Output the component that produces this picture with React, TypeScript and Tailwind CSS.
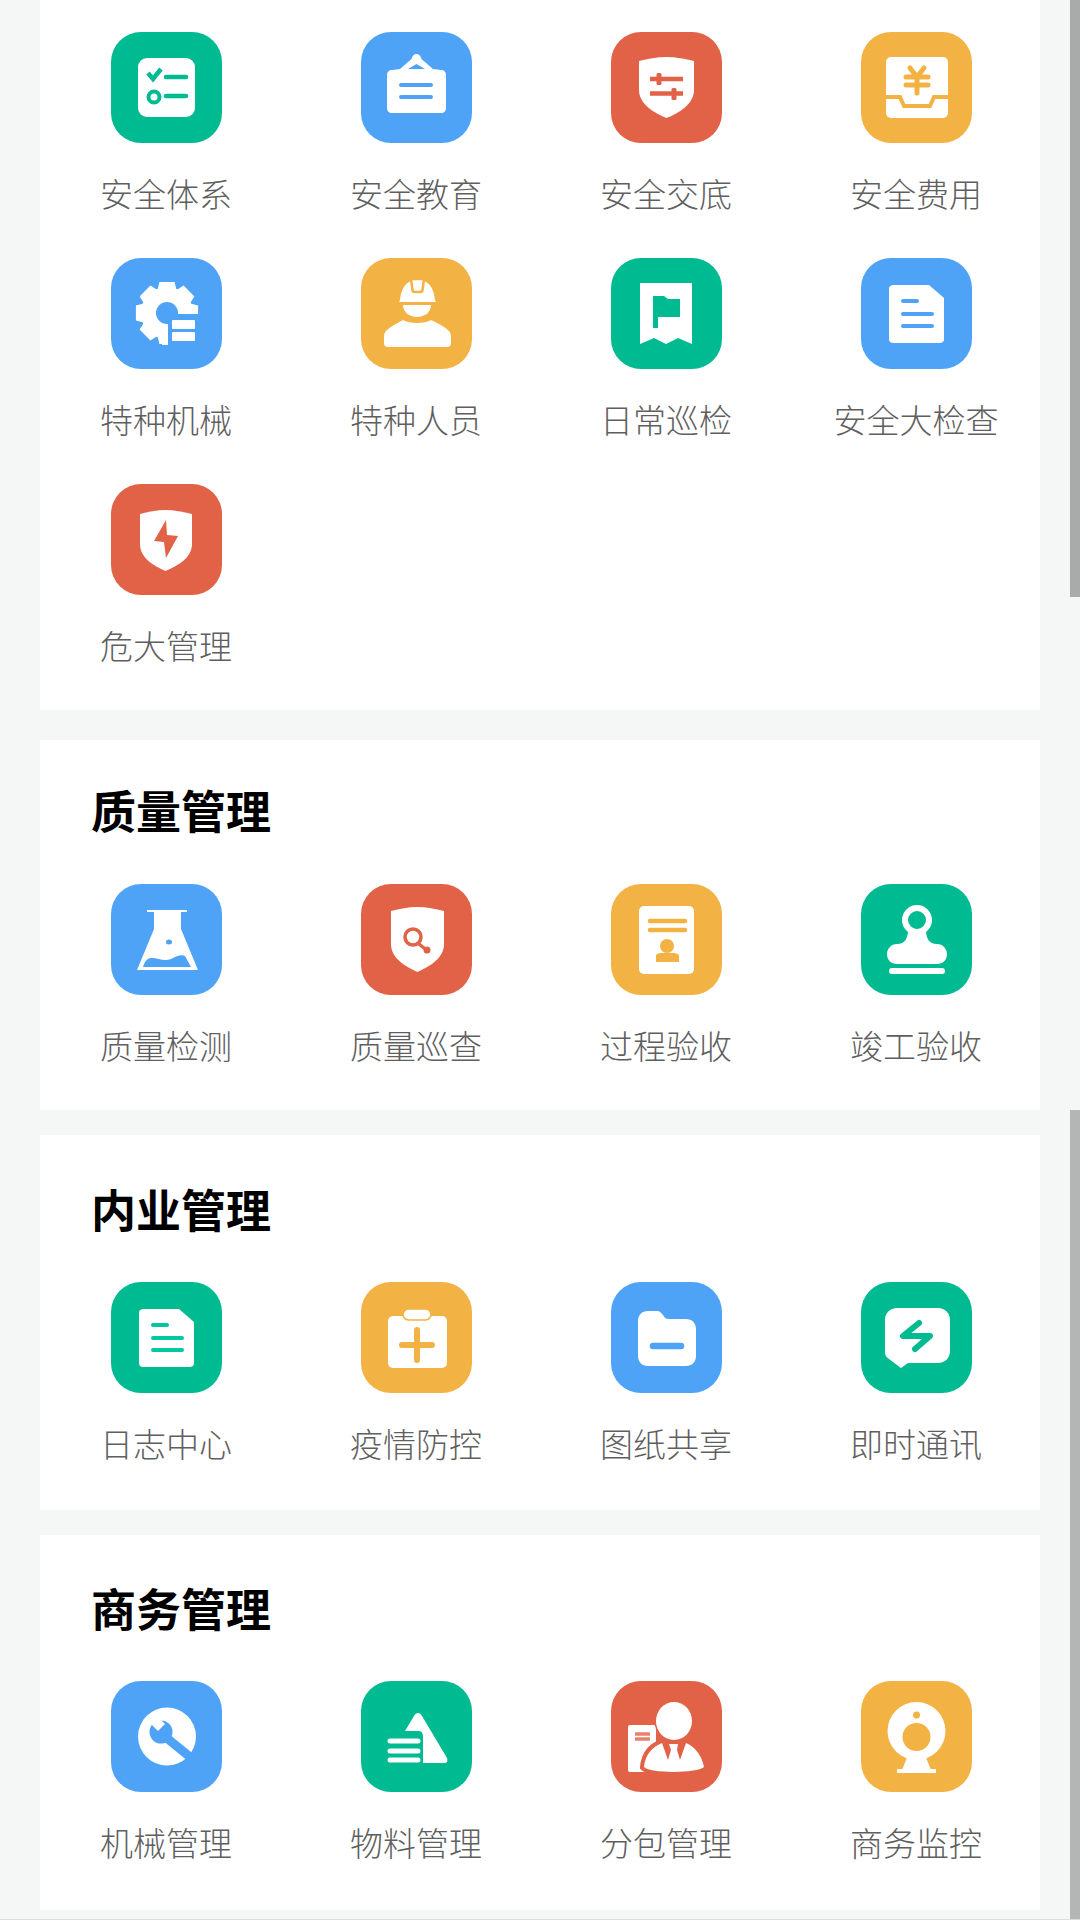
import React from 'react';

const GREEN = '#00BA92';
const BLUE = '#4EA3F7';
const RED = '#E26248';
const ORANGE = '#F3B244';

const bgByColor: Record<string, string> = {
  [GREEN]: 'bg-[#00BA92]',
  [BLUE]: 'bg-[#4EA3F7]',
  [RED]: 'bg-[#E26248]',
  [ORANGE]: 'bg-[#F3B244]',
};

const SHIELD = 'M55.5 25 C46 25 37 27 28 29 L28 58 C28 72 43 81 55.5 86 C68 81 83 72 83 58 L83 29 C74 27 65 25 55.5 25 Z';

// 8 teeth gear outline, centre 56,55
const gearPath = () => {
  const pts: string[] = [];
  for (let i = 0; i < 8; i++) {
    const a = (i * Math.PI) / 4 - Math.PI / 2;
    const steps: [number, number][] = [
      [-0.36, 26],
      [-0.24, 32],
      [0.24, 32],
      [0.36, 26],
    ];
    steps.forEach(([d, r]) => {
      pts.push(`${(56 + r * Math.cos(a + d)).toFixed(1)} ${(55 + r * Math.sin(a + d)).toFixed(1)}`);
    });
  }
  return `M${pts.join(' L')} Z`;
};

const Checklist = () => (
  <>
    <rect x="27" y="26" width="57" height="59" rx="9" fill="#fff" />
    <path d="M37 41 L42 47 L50 37" fill="none" stroke={GREEN} strokeWidth="4.5" />
    <path d="M55 45 H75 M55 64 H75" stroke={GREEN} strokeWidth="4.5" strokeLinecap="round" />
    <circle cx="43" cy="65" r="5.5" fill="none" stroke={GREEN} strokeWidth="4" />
  </>
);

const HangingBoard = () => (
  <>
    <path d="M55.5 22 C58 22 60 24 60.5 27 L72 37 L80 38 C83 38 85 40 85 43 L85 76 C85 79 83 81 80 81 L31 81 C28 81 26 79 26 76 L26 43 C26 40 28 38 31 38 L39 37 L50.5 27 C51 24 53 22 55.5 22 Z" fill="#fff" />
    <path d="M47 37 L55.5 32 L64 37 Z" fill={BLUE} />
    <path d="M40 53 H70 M40 65 H70" stroke={BLUE} strokeWidth="4" strokeLinecap="round" />
  </>
);

const ShieldSliders = () => (
  <>
    <path d={SHIELD} fill="#fff" />
    <path d="M39 47 H72 M39 61.5 H72" stroke={RED} strokeWidth="4.5" />
    <rect x="45.5" y="41" width="5" height="12" rx="1.5" fill={RED} />
    <rect x="60.5" y="56" width="5" height="12" rx="1.5" fill={RED} />
  </>
);

const YenTray = () => (
  <>
    <rect x="25" y="25" width="62" height="61" rx="5" fill="#fff" />
    <path d="M24 65 H39 L43 74 H69 L73 65 H88" fill="none" stroke={ORANGE} strokeWidth="4" />
    <path d="M49 36 L56 45 L63 36 M56 45 V61 M45 45 H67 M45 53 H67" fill="none" stroke={ORANGE} strokeWidth="5" strokeLinecap="round" />
  </>
);

const GearList = () => (
  <>
    <path d={gearPath()} fill="#fff" />
    <circle cx="56" cy="55" r="11" fill={BLUE} />
    <rect x="56" y="56" width="34" height="34" fill={BLUE} />
    <rect x="51" y="66" width="6" height="21" fill="#fff" />
    <rect x="61" y="62" width="23" height="9" rx="1" fill="#fff" />
    <rect x="61" y="74" width="23" height="9" rx="1" fill="#fff" />
  </>
);

const Worker = () => (
  <>
    <path d="M39 42 C40 32 44 25 50 23 H63 C69 25 73 32 74 42 L75 44 H38 Z" fill="#fff" />
    <path d="M50 21 H63 L61.5 32 C61.5 33 60.5 34 59 34 H54 C52.5 34 51.5 33 51.5 32 Z" fill="#fff" stroke={ORANGE} strokeWidth="2.5" />
    <path d="M42 47 H70 C70 54 64 59 56 59 C48 59 42 54 42 47 Z" fill="#fff" />
    <path d="M23 78 C23 71 35 66 42 62 C48 66 64 66 70 62 C78 66 90 71 90 78 L90 85 C90 88 88 89 86 89 L27 89 C25 89 23 88 23 85 Z" fill="#fff" />
  </>
);

const FlagTicket = () => (
  <>
    <path d="M29 25 H81 V86 L67 80 L55 86 L43 80 L29 86 Z" fill="#fff" />
    <path d="M42 38 H53 L57 41 H69 V59 H47 V70 H42 Z" fill={GREEN} />
  </>
);

const Doc = ({ color, top = 27 }: { color: string; top?: number }) => (
  <>
    <path d={`M33 ${top} H68 L83 ${top + 13} V${top + 54} C83 ${top + 57} 81 ${top + 58} 78 ${top + 58} H33 C30 ${top + 58} 28 ${top + 57} 28 ${top + 54} V${top + 4} C28 ${top + 1} 30 ${top} 33 ${top} Z`} fill="#fff" />
    <path d={`M42 ${top + 16} H56 M42 ${top + 29} H71 M42 ${top + 41} H71`} stroke={color} strokeWidth="4" strokeLinecap="round" />
  </>
);

const ShieldBolt = () => (
  <>
    <path d="M54.5 26 C46 26 37 28 29 30 L29 60 C29 74 43 82 54.5 87 C66 82 81 74 81 60 L81 30 C72 28 63 26 54.5 26 Z" fill="#fff" />
    <path d="M55 36 L43 57 L53 58 L55 74 L67 52 L56 51 Z" fill={RED} />
  </>
);

const Flask = () => (
  <>
    <path d="M36 26 H76 V28 H70 V45 L87 86 H26 L43 45 V28 H36 Z" fill="#fff" />
    <path d="M32 83 C34 76 37 74 41 74 C48 74 52 78 60 75 C66 72 70 70 74 72 L80 83 Z" fill={BLUE} />
    <ellipse cx="58" cy="58" rx="3" ry="2.5" fill={BLUE} />
  </>
);

const ShieldSearch = () => (
  <>
    <path d="M56.5 23 C47 23 39 25 30 27 L30 60 C30 75 46 83 56.5 88 C67 83 83 75 83 60 L83 27 C74 25 66 23 56.5 23 Z" fill="#fff" />
    <circle cx="52" cy="53" r="8" fill="none" stroke={RED} strokeWidth="3.5" />
    <path d="M58 60 L68 68" stroke={RED} strokeWidth="3.5" />
    <circle cx="66" cy="66" r="3.5" fill={RED} />
  </>
);

const PersonCard = () => (
  <>
    <rect x="28" y="22" width="55" height="68" rx="5" fill="#fff" />
    <path d="M39 37 H74 M39 46 H74" stroke={ORANGE} strokeWidth="4.5" strokeLinecap="round" />
    <circle cx="56" cy="62" r="7" fill={ORANGE} />
    <path d="M45 72 C45 70 47 69 50 69 H62 C65 69 68 70 68 72 V78 H45 Z" fill={ORANGE} />
  </>
);

const Stamp = () => (
  <>
    <circle cx="56" cy="36" r="12" fill="none" stroke="#fff" strokeWidth="6" />
    <path d="M47 46 L65 46 C65 54 68 60 76 60 C82 60 86 65 86 70 C86 76 82 80 76 80 H36 C30 80 26 76 26 70 C26 65 30 60 36 60 C44 60 47 54 47 46 Z" fill="#fff" />
    <rect x="28" y="84" width="56" height="6" rx="3" fill="#fff" />
  </>
);

const MedKit = () => (
  <>
    <rect x="27" y="34" width="59" height="52" rx="5" fill="#fff" />
    <rect x="42" y="27" width="28" height="11" rx="5.5" fill="#fff" stroke={ORANGE} strokeWidth="1.5" />
    <path d="M56 48 V78 M41 63 H71" stroke={ORANGE} strokeWidth="6" strokeLinecap="round" />
  </>
);

const Folder = () => (
  <>
    <path d="M37 29 H46 C49 29 50 31 52 33 C54 36 55 37 58 37 H75 C81 37 85 41 85 47 V74 C85 80 81 84 75 84 H37 C31 84 27 80 27 74 V39 C27 33 31 29 37 29 Z" fill="#fff" />
    <path d="M42 64 H70" stroke={BLUE} strokeWidth="6.5" strokeLinecap="round" />
  </>
);

const ChatBolt = () => (
  <>
    <path d="M36 26 H77 C84 26 89 31 89 38 V69 C89 76 84 81 77 81 H47 L40 86 L28 77 C25 75 24 73 24 70 V38 C24 31 29 26 36 26 Z" fill="#fff" />
    <path d="M58 41 L42 54 H69 L54 67" fill="none" stroke={GREEN} strokeWidth="6" strokeLinecap="round" strokeLinejoin="round" />
  </>
);

const Wrench = () => (
  <>
    <circle cx="56" cy="55.5" r="29" fill="#fff" />
    <path d="M52 54 L84 80" stroke={BLUE} strokeWidth="9" />
    <circle cx="50" cy="51" r="11.5" fill={BLUE} />
    <path d="M38 41 L47 50 L54 43 L45 34 Z" fill="#fff" />
  </>
);

const MaterialPile = () => (
  <>
    <path d="M53 35 C55 31 59 31 61 35 L86 77 C87 80 86 82 83 82 L62 82 V56 C62 53 61 50 58 50 L44 50 Z" fill="#fff" />
    <path d="M29 60 H57 M29 70 H57 M29 79 H57" stroke="#fff" strokeWidth="5" strokeLinecap="round" />
  </>
);

const Contractor = () => (
  <>
    <rect x="17" y="44" width="28" height="47" rx="2" fill="#fff" />
    <path d="M24 53 H39 M24 58 H39" stroke={RED} strokeWidth="3.5" opacity="0.8" />
    <path d="M33 86 C34 74 41 66 51 62 L57 79 L60 69 L58 63 H67 L66 69 L69 79 L75 62 C85 66 91 76 93 86 C88 92 40 93 33 86 Z" fill="#fff" stroke={RED} strokeWidth="8" paintOrder="stroke" />
    <ellipse cx="63" cy="40" rx="18" ry="19" fill="#fff" stroke={RED} strokeWidth="3" paintOrder="stroke" />
  </>
);

const Webcam = () => (
  <>
    <circle cx="55.5" cy="50" r="29" fill="#fff" />
    <circle cx="55.5" cy="56" r="14" fill={ORANGE} />
    <circle cx="55.5" cy="34" r="3.5" fill={ORANGE} />
    <path d="M47 74 H64 L70 89 H41 Z" fill="#fff" />
    <rect x="36" y="88" width="39" height="4" fill="#fff" />
  </>
);

interface Item {
  label: string;
  color: string;
  icon: React.ReactNode;
}

interface Section {
  title?: string;
  wrap: string;
  head?: string;
  items: Item[];
}

const sections: Section[] = [
  {
    wrap: 'pt-[32px]',
    items: [
      { label: '安全体系', color: GREEN, icon: <Checklist /> },
      { label: '安全教育', color: BLUE, icon: <HangingBoard /> },
      { label: '安全交底', color: RED, icon: <ShieldSliders /> },
      { label: '安全费用', color: ORANGE, icon: <YenTray /> },
      { label: '特种机械', color: BLUE, icon: <GearList /> },
      { label: '特种人员', color: ORANGE, icon: <Worker /> },
      { label: '日常巡检', color: GREEN, icon: <FlagTicket /> },
      { label: '安全大检查', color: BLUE, icon: <Doc color={BLUE} /> },
      { label: '危大管理', color: RED, icon: <ShieldBolt /> },
    ],
  },
  {
    title: '质量管理',
    wrap: 'mt-[30px]',
    head: 'h-[144px] pt-[38px]',
    items: [
      { label: '质量检测', color: BLUE, icon: <Flask /> },
      { label: '质量巡查', color: RED, icon: <ShieldSearch /> },
      { label: '过程验收', color: ORANGE, icon: <PersonCard /> },
      { label: '竣工验收', color: GREEN, icon: <Stamp /> },
    ],
  },
  {
    title: '内业管理',
    wrap: 'mt-[25px] pb-[2px]',
    head: 'h-[147px] pt-[42px]',
    items: [
      { label: '日志中心', color: GREEN, icon: <Doc color="#00C8A0" /> },
      { label: '疫情防控', color: ORANGE, icon: <MedKit /> },
      { label: '图纸共享', color: BLUE, icon: <Folder /> },
      { label: '即时通讯', color: GREEN, icon: <ChatBolt /> },
    ],
  },
  {
    title: '商务管理',
    wrap: 'mt-[25px] pb-[3px]',
    head: 'h-[146px] pt-[41px]',
    items: [
      { label: '机械管理', color: BLUE, icon: <Wrench /> },
      { label: '物料管理', color: GREEN, icon: <MaterialPile /> },
      { label: '分包管理', color: RED, icon: <Contractor /> },
      { label: '商务监控', color: ORANGE, icon: <Webcam /> },
    ],
  },
];

const App: React.FC = () => {
  return (
    <div className="relative w-[1080px] h-[1920px] overflow-hidden bg-[#f5f6f6] font-['Noto_Sans_CJK_SC','Noto_Sans',sans-serif]">
      {sections.map((section, i) => (
        <section key={i} className={`ml-[40px] w-[1000px] bg-white ${section.wrap}`}>
          {section.title && (
            <div className={section.head}>
              <h2 className="pl-[51px] text-[45px] leading-[64px] font-bold text-black">{section.title}</h2>
            </div>
          )}
          <div className="grid grid-cols-4 w-[1000px] translate-x-[1px]">
            {section.items.map(item => (
              <div key={item.label} className="h-[226px] flex flex-col items-center">
                <div className={`w-[111px] h-[111px] rounded-[30px] ${bgByColor[item.color]}`}>
                  <svg viewBox="0 0 111 111" className="block w-[111px] h-[111px]">
                    {item.icon}
                  </svg>
                </div>
                <span className="mt-[26px] text-[33px] leading-[48px] font-light text-[#5f5f5f]">{item.label}</span>
              </div>
            ))}
          </div>
        </section>
      ))}
      {/* scrollbar thumbs */}
      <div className="absolute right-0 top-0 w-[10px] h-[597px] bg-[#a9abab]" />
      <div className="absolute right-0 top-[1110px] w-[10px] h-[810px] bg-[#b4b6b5]" />
      <div className="absolute left-0 bottom-0 w-full h-px bg-[#dcdcdc]" />
    </div>
  );
};

export default App;
